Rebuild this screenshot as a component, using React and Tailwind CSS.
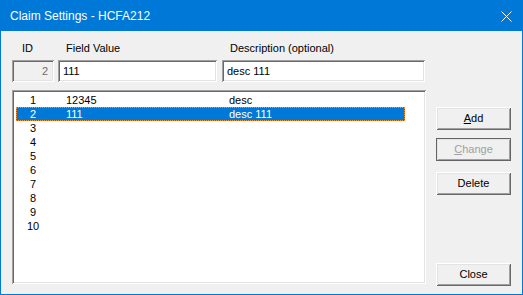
import React from "react";

const rows = [
  { id: 1, value: "12345", desc: "desc" },
  { id: 2, value: "111", desc: "desc 111", selected: true },
  { id: 3 },
  { id: 4 },
  { id: 5 },
  { id: 6 },
  { id: 7 },
  { id: 8 },
  { id: 9 },
  { id: 10 },
];

const sunken =
  "shadow-[inset_1px_1px_0_#a0a0a0,inset_-1px_-1px_0_#ffffff,inset_2px_2px_0_#696969,inset_-2px_-2px_0_#e3e3e3]";
const raised =
  "shadow-[inset_1px_1px_0_#ffffff,inset_-1px_-1px_0_#696969,inset_2px_2px_0_#e3e3e3,inset_-2px_-2px_0_#a0a0a0]";

function Button({ children, disabled, framed, className = "" }) {
  return (
    <div
      className={`h-[23px] w-[75px] flex items-center justify-center bg-[#f0f0f0] ${raised} ${
        framed ? "outline outline-1 outline-[#646464] -outline-offset-1" : ""
      } ${disabled ? "text-[#a0a0a0]" : "text-black"} ${className}`}
    >
      {children}
    </div>
  );
}

export default function App() {
  return (
    <div
      className="w-[523px] h-[295px] flex flex-col bg-[#f0f0f0] border border-[#0078d7] text-[11px] leading-[13px] text-black"
      style={{ fontFamily: '"Liberation Sans", Arial, sans-serif' }}
    >
      {/* title bar */}
      <div className="h-[30px] shrink-0 bg-[#0078d7] flex items-center justify-between pl-[9px] pr-[9px] text-white">
        <span className="text-[12px]">Claim Settings - HCFA212</span>
        <svg width="11" height="11" viewBox="0 0 11 11" className="mr-[1px]">
          <path d="M0.5 0.5 L10.5 10.5 M10.5 0.5 L0.5 10.5" stroke="#fff" strokeWidth="1" />
        </svg>
      </div>

      <div className="flex-1 flex flex-col pt-[11px] pl-[11px] pr-[11px]">
        {/* labels */}
        <div className="flex h-[13px]">
          <div className="w-[42px] pl-[10px]">ID</div>
          <div className="w-[159px] ml-[4px] pl-[8px]">Field Value</div>
          <div className="w-[203px] ml-[5px] pl-[8px]">Description (optional)</div>
        </div>

        {/* inputs */}
        <div className="flex mt-[5px]">
          <div className={`w-[42px] h-[22px] bg-[#f0f0f0] ${sunken} flex items-center justify-end pr-[6px] text-[#6d6d6d]`}>
            2
          </div>
          <div className={`w-[159px] h-[22px] ml-[4px] bg-white ${sunken} flex items-center pl-[5px]`}>111</div>
          <div className={`w-[203px] h-[22px] ml-[5px] bg-white ${sunken} flex items-center pl-[5px]`}>desc 111</div>
        </div>

        {/* list + buttons */}
        <div className="flex mt-[8px] gap-[10px]">
          <div className={`w-[414px] h-[194px] bg-white ${sunken} pt-[3px] pl-[4px]`}>
            {rows.map((r) => (
              <div
                key={r.id}
                className={`flex h-[14px] w-[389px] items-center ${
                  r.selected
                    ? "bg-[#0078d7] text-white outline outline-1 outline-dotted outline-[#f7943b] -outline-offset-1"
                    : "text-black"
                }`}
              >
                <div className="w-[34px] text-center">{r.id}</div>
                <div className="w-[179px] pl-[16px]">{r.value}</div>
                <div className="flex-1">{r.desc}</div>
              </div>
            ))}
          </div>

          <div className="flex flex-col pt-[17px] h-[196px]">
            <Button>
              <span><span className="underline">A</span>dd</span>
            </Button>
            <Button disabled framed className="mt-[8px]">
              <span><span className="underline">C</span>hange</span>
            </Button>
            <Button className="mt-[11px]">Delete</Button>
            <Button className="mt-auto">Close</Button>
          </div>
        </div>
      </div>
    </div>
  );
}
